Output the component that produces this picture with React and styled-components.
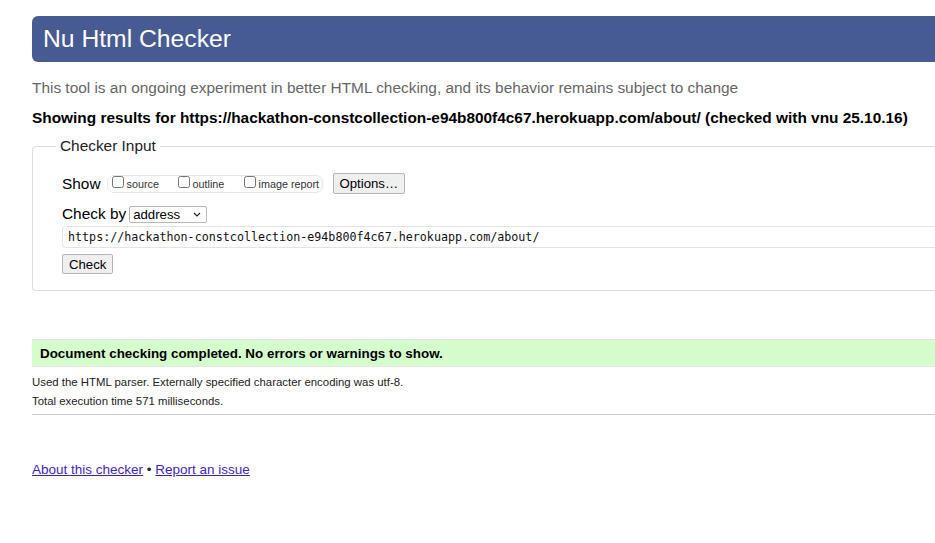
import React from "react";
import styled, { createGlobalStyle } from "styled-components";

const GlobalStyle = createGlobalStyle`
  html, body {
    margin: 0;
    padding: 0;
    background: #ffffff;
    overflow: hidden;
  }
  body {
    font-family: "Liberation Sans", Arial, sans-serif;
    color: #000;
  }
`;

const Page = styled.div`
  width: 1100px;
  padding: 16px 0 0 32px;
`;

const Header = styled.h1`
  margin: 0;
  height: 46px;
  display: flex;
  align-items: center;
  padding-left: 11px;
  background: #465b94;
  border-radius: 6px 0 0 6px;
  color: #ffffff;
  font-weight: normal;
  font-size: 24.7px;
`;

const Intro = styled.p`
  margin: 17px 0 0;
  color: #666666;
  font-size: 15.4px;
  line-height: 18px;
`;

const Showing = styled.p`
  margin: 12px 0 0;
  font-weight: bold;
  font-size: 15.4px;
  line-height: 18px;
`;

const Fieldset = styled.fieldset`
  margin: 10px 0 0;
  padding: 8px 0 16px 29px;
  border: 1px solid #dddddd;
  border-right: none;
  border-radius: 4px 0 0 4px;
  min-width: 0;
`;

const Legend = styled.legend`
  margin-left: -6px;
  padding: 0 4px;
  font-size: 15.4px;
  color: #222;
`;

const Row = styled.div`
  display: flex;
  align-items: center;
  gap: ${(p) => p.$gap || 4}px;
  margin-top: ${(p) => p.$top || 0}px;
  font-size: 15.4px;
`;

const CheckGroup = styled.div`
  display: flex;
  align-items: center;
  height: 16px;
  padding: 0 0 0 4px;
  border: 1px solid #e6e6e6;
  border-radius: 7px;
`;

const CheckLabel = styled.label`
  display: flex;
  align-items: flex-end;
  width: ${(p) => p.$w}px;
  font-size: 10.8px;
  color: #333;
  input {
    margin: 0 3px 0 0;
    width: 12px;
    height: 12px;
    position: relative;
    top: -2px;
  }
`;

const Button = styled.button`
  font-family: "Liberation Sans", Arial, sans-serif;
  font-size: 13.2px;
  height: ${(p) => p.$h || 21}px;
  margin-left: ${(p) => p.$left || 0}px;
  padding: 0 6px;
  background: #efefef;
  border: 1px solid #b5b5b5;
  border-radius: 2px;
  color: #000;
`;

const SelectWrap = styled.span`
  position: relative;
  display: inline-flex;

  svg {
    position: absolute;
    right: 6px;
    top: 6px;
    pointer-events: none;
  }
`;

const Select = styled.select`
  appearance: none;
  font-family: "Liberation Sans", Arial, sans-serif;
  font-size: 13.2px;
  width: 78px;
  height: 17px;
  padding: 0 0 0 3px;
  border: 1px solid #b8b8b8;
  border-radius: 2px;
  background: #fff;
  color: #000;
`;

const UrlInput = styled.div`
  margin-top: 3px;
  height: 20px;
  display: flex;
  align-items: center;
  padding-left: 5px;
  border: 1px solid #e4e4e4;
  border-right: none;
  border-radius: 4px 0 0 4px;
  font-family: "DejaVu Sans Mono", "Liberation Mono", monospace;
  font-size: 11.7px;
  color: #111;
`;

const Success = styled.div`
  margin-top: 48px;
  height: 26px;
  display: flex;
  align-items: center;
  padding-left: 8px;
  background: #d4fdcb;
  border-top: 1px solid #e6e6e6;
  border-bottom: 1px solid #e6e6e6;
  font-weight: bold;
  font-size: 13.4px;
`;

const Detail = styled.p`
  margin: ${(p) => p.$top || 0}px 0 0;
  font-size: 11.4px;
  line-height: 14px;
  color: #222;
`;

const Rule = styled.hr`
  margin: 6px 0 0;
  border: none;
  border-top: 1px solid #cccccc;
`;

const Footer = styled.p`
  margin: 47px 0 0;
  font-size: 13.5px;
  color: #222;
  a {
    color: #3f1ed6;
    text-decoration: underline;
  }
`;

export default function App() {
  return (
    <>
      <GlobalStyle />
      <Page>
        <Header>Nu Html Checker</Header>
        <Intro>
          This tool is an ongoing experiment in better HTML checking, and its
          behavior remains subject to change
        </Intro>
        <Showing>
          Showing results for
          https://hackathon-constcollection-e94b800f4c67.herokuapp.com/about/
          (checked with vnu 25.10.16)
        </Showing>
        <Fieldset>
          <Legend>Checker Input</Legend>
          <Row $top={10} $gap={6}>
            <span>Show</span>
            <CheckGroup>
              <CheckLabel $w={66}>
                <input type="checkbox" />
                source
              </CheckLabel>
              <CheckLabel $w={66}>
                <input type="checkbox" />
                outline
              </CheckLabel>
              <CheckLabel $w={78}>
                <input type="checkbox" />
                image report
              </CheckLabel>
            </CheckGroup>
            <Button $left={4}>Options…</Button>
          </Row>
          <Row $top={11} $gap={3}>
            <span>Check by</span>
            <SelectWrap>
              <Select defaultValue="address">
                <option value="address">address</option>
              </Select>
              <svg width="8" height="5" viewBox="0 0 8 5">
                <path d="M1 1 L4 4 L7 1" fill="none" stroke="#222" strokeWidth="1.1" />
              </svg>
            </SelectWrap>
          </Row>
          <UrlInput>
            https://hackathon-constcollection-e94b800f4c67.herokuapp.com/about/
          </UrlInput>
          <Row $top={6}>
            <Button $h={20}>Check</Button>
          </Row>
        </Fieldset>
        <Success>Document checking completed. No errors or warnings to show.</Success>
        <Detail $top={8}>
          Used the HTML parser. Externally specified character encoding was
          utf-8.
        </Detail>
        <Detail $top={5}>Total execution time 571 milliseconds.</Detail>
        <Rule />
        <Footer>
          <a href="#about">About this checker</a> •{" "}
          <a href="#issue">Report an issue</a>
        </Footer>
      </Page>
    </>
  );
}
